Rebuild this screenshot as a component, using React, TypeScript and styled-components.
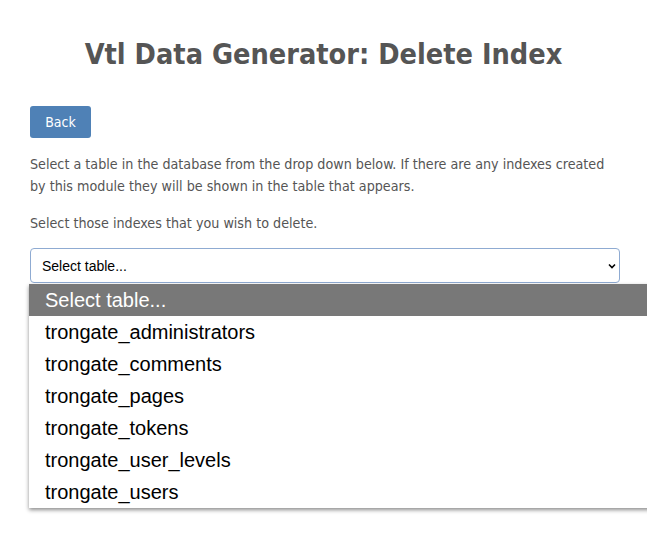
import React from "react";
import styled, { createGlobalStyle } from "styled-components";

const Global = createGlobalStyle`
  html, body { margin: 0; padding: 0; background: #fff; overflow: hidden; }
  body { font-family: "DejaVu Sans Condensed", "DejaVu Sans", sans-serif; }
`;

const Page = styled.div`
  position: relative;
  width: 647px;
  height: 540px;
  padding: 0 27px 0 30px;
  box-sizing: border-box;
`;

const Title = styled.h1`
  margin: 0 -27px 0 -30px;
  padding-top: 35px;
  height: 72px;
  box-sizing: border-box;
  text-align: center;
  font-size: 28.6px;
  font-weight: bold;
  color: #555;
  line-height: 38px;
`;

const BackButton = styled.button`
  display: block;
  margin-top: 34px;
  width: 61px;
  height: 32px;
  border: none;
  border-radius: 3px;
  background: #4f81b6;
  color: #fff;
  font-family: "DejaVu Sans Condensed", sans-serif;
  font-size: 14px;
  padding: 0;
`;

const Para = styled.p<{ $top: number }>`
  margin: 0;
  margin-top: ${(p) => p.$top}px;
  font-size: 14.2px;
  line-height: 22px;
  color: #555;
`;

const SelectBox = styled.div`
  margin-top: 14px;
  height: 35px;
  box-sizing: border-box;
  border: 1px solid #8fabd2;
  border-radius: 4px;
  display: flex;
  align-items: center;
  justify-content: space-between;
  padding: 0 3px 0 11px;
  font-family: "Liberation Sans", Arial, sans-serif;
  font-size: 14px;
  color: #000;
`;

const Chevron = styled.svg`
  width: 8px;
  height: 6px;
`;

const Dropdown = styled.ul`
  position: absolute;
  left: 29px;
  top: 284px;
  width: 640px;
  margin: 0;
  padding: 0;
  list-style: none;
  background: #fff;
  box-shadow: 0 2px 4px rgba(0, 0, 0, 0.45);
  font-family: "Liberation Sans", Arial, sans-serif;
  font-size: 20px;
`;

const Option = styled.li<{ $selected?: boolean }>`
  height: 32px;
  line-height: 32px;
  padding-left: 16px;
  background: ${(p) => (p.$selected ? "#787878" : "#fff")};
  color: ${(p) => (p.$selected ? "#fff" : "#000")};
`;

const options = [
  "trongate_administrators",
  "trongate_comments",
  "trongate_pages",
  "trongate_tokens",
  "trongate_user_levels",
  "trongate_users",
];

export default function App() {
  return (
    <Page>
      <Global />
      <Title>Vtl Data Generator: Delete Index</Title>
      <BackButton>Back</BackButton>
      <Para $top={15}>
        Select a table in the database from the drop down below. If there are any indexes created
        by this module they will be shown in the table that appears.
      </Para>
      <Para $top={15}>Select those indexes that you wish to delete.</Para>
      <SelectBox>
        <span>Select table...</span>
        <Chevron viewBox="0 0 8 6">
          <path d="M1 1.5 L4 4.5 L7 1.5" fill="none" stroke="#000" strokeWidth="1.6" />
        </Chevron>
      </SelectBox>
      <Dropdown>
        <Option $selected>Select table...</Option>
        {options.map((o) => (
          <Option key={o}>{o}</Option>
        ))}
      </Dropdown>
    </Page>
  );
}
